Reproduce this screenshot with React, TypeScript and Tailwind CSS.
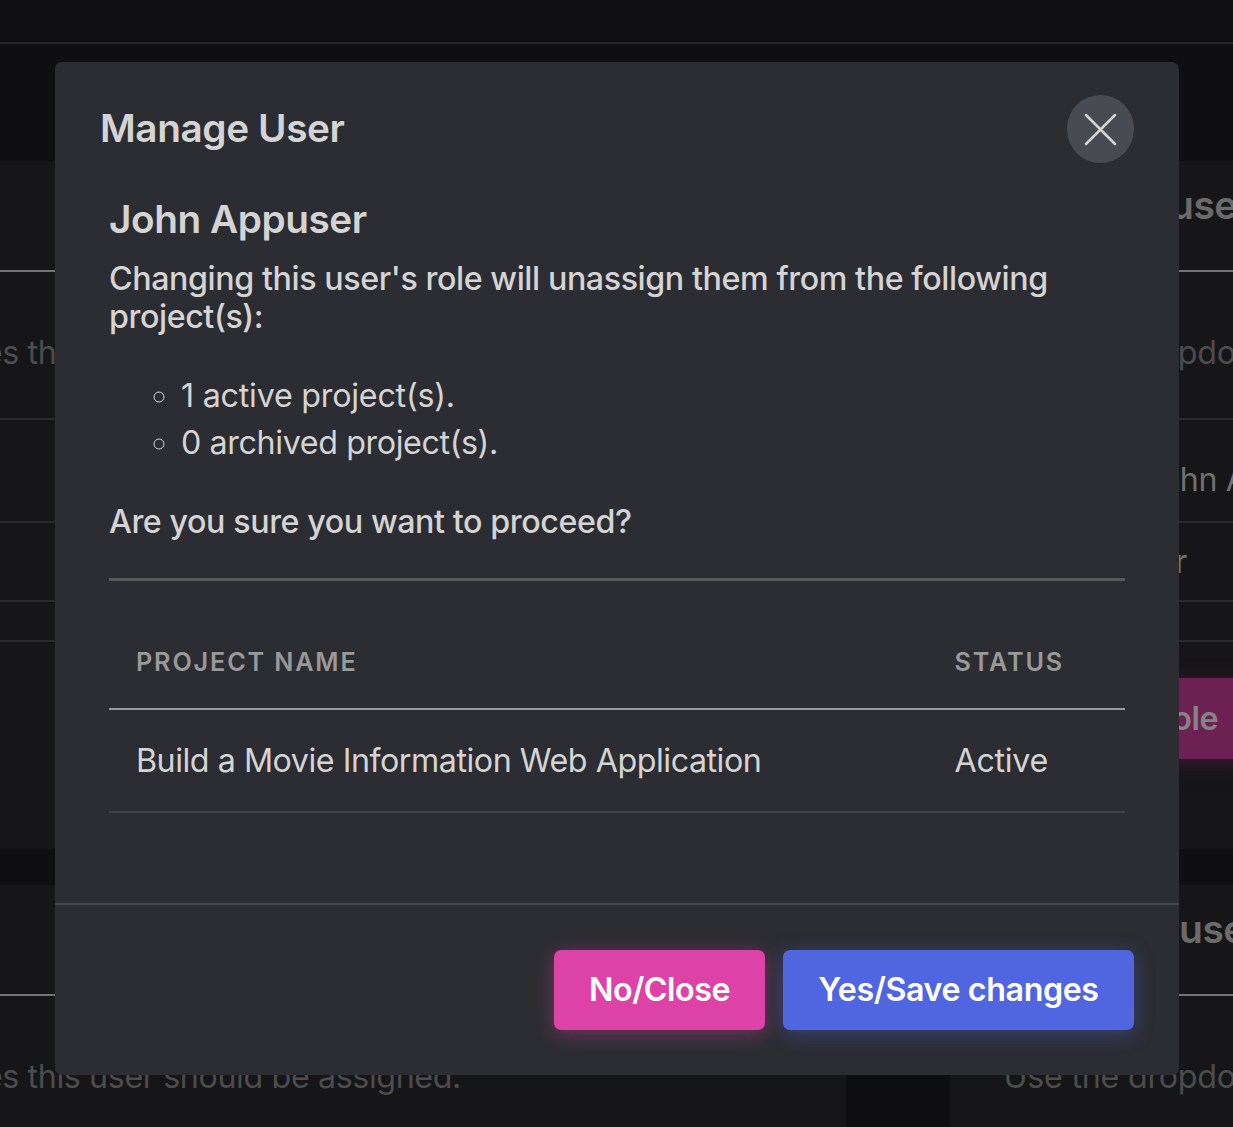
import React from "react";

const stats = [
  { text: "1 active project(s).", tracking: "tracking-[-0.24px]" },
  { text: "0 archived project(s).", tracking: "tracking-[-0.4px]" },
];

function LeftCard({ children }: { children?: React.ReactNode }) {
  return (
    <section className="w-[846px] bg-[#161618]">
      <div className="h-[109px]" />
      <div className="h-0.5 bg-[#747474]" />
      <div className="flex h-[146px] w-[461px] items-center justify-end whitespace-nowrap pt-4 tracking-[-0.4px] text-[#4c4c4c]">
        Select the roles this user should be assigned.
      </div>
      {children}
    </section>
  );
}

function RightCard({ titlePad, children }: { titlePad: string; children?: React.ReactNode }) {
  return (
    <section className="w-[283px] overflow-hidden bg-[#161618]">
      <div className={`flex h-[109px] items-center whitespace-nowrap pb-[21px] text-[39px] font-semibold tracking-[-0.5px] text-[#6b6b6b] ${titlePad}`}>
        user
      </div>
      <div className="h-0.5 bg-[#747474]" />
      <div className="flex h-[146px] items-center whitespace-nowrap pl-[53.5px] pt-4 tracking-[-0.25px] text-[#4c4c4c]">
        Use the dropdown
      </div>
      {children}
    </section>
  );
}

const line = "border-t-2 border-[#2a2a2c]";

function Backdrop() {
  return (
    <div className="h-full w-full">
      <div className="h-11 border-b-2 border-[#262628] bg-[#101012]" />
      <div className="flex h-[805px] justify-between pt-[117px]">
        <LeftCard>
          <div className={`h-[103px] ${line}`} />
          <div className={`h-[79px] ${line}`} />
          <div className={`h-10 ${line}`} />
          <div className={line} />
        </LeftCard>
        <RightCard titlePad="pl-[220px]">
          <div className={`flex h-[103px] items-center whitespace-nowrap pl-[193px] pt-[18px] text-[#707070] ${line}`}>
            John Appuser
          </div>
          <div className={`flex h-[79px] items-center justify-end pr-[46px] text-[#707070] ${line}`}>Developer</div>
          <div className={`h-10 ${line}`} />
          <div className={`flex ${line}`}>
            <div className="mt-9 ml-[54px] flex h-[81px] w-[249px] shrink-0 items-center justify-end bg-[#6d2152] pr-[35px] font-semibold text-[#868386] shadow-[0_4px_20px_rgba(109,33,82,0.45)]">
              Change role
            </div>
          </div>
        </RightCard>
      </div>
      <div className="flex h-[278px] justify-between pt-9">
        <LeftCard />
        <RightCard titlePad="pl-[229px]" />
      </div>
    </div>
  );
}

function ManageUserDialog() {
  return (
    <div
      role="dialog"
      className="absolute left-[55px] top-[62px] flex h-[1013px] w-[1124px] flex-col rounded-[7px] bg-[#2c2d32] text-[#d4d4d4]"
    >
      <header className="flex h-[134px] items-center justify-between px-[45px]">
        <h2 className="pb-1 text-[38.75px] font-semibold leading-[47px] tracking-[-0.4px]">Manage User</h2>
        <button aria-label="Close" className="flex h-[68px] w-[67px] items-center justify-center rounded-full bg-[#494b52]">
          <svg viewBox="0 0 33 33" className="size-[33px]" fill="none" stroke="#d6d6d6" strokeWidth="2.5" strokeLinecap="round">
            <path d="M2 2 31 31M31 2 2 31" />
          </svg>
        </button>
      </header>
      <main className="flex-1 px-[54px]">
        <h3 className="text-[38.75px] font-semibold leading-[45.25px] tracking-[-0.45px]">John Appuser</h3>
        <p className="mt-[19px] font-medium leading-[37.8px] tracking-[-0.43px]">
          Changing this user's role will unassign them from the following project(s):
        </p>
        <ul className="mt-9 pl-[72px] leading-[47.25px] [list-style-type:circle]">
          {stats.map((s) => (
            <li key={s.text} className={s.tracking}>
              {s.text}
            </li>
          ))}
        </ul>
        <p className="mt-[36.5px] font-medium leading-[37.8px] tracking-[-0.43px]">Are you sure you want to proceed?</p>
        <hr className="mt-[37.5px] h-[3px] border-0 bg-[#58595d]" />
        <table className="mt-[35px] w-full table-fixed text-left">
          <thead>
            <tr className="h-[93px] border-b-2 border-[#999b9c] text-[25.2px] uppercase tracking-[1.85px] text-[#999999]">
              <th className="w-[819px] pl-[27px] font-semibold">Project Name</th>
              <th className="pl-[26.5px] font-semibold">Status</th>
            </tr>
          </thead>
          <tbody>
            <tr className="h-[103px] border-b-2 border-[#424347]">
              <td className="pl-[27px] tracking-[-0.48px]">Build a Movie Information Web Application</td>
              <td className="pl-[26.5px] tracking-[-0.3px]">Active</td>
            </tr>
          </tbody>
        </table>
      </main>
      <footer className="flex h-[172px] items-center justify-end gap-[18px] border-t-2 border-[#45464b] px-[45px] font-semibold text-white">
        <button className="h-20 w-[211px] rounded-[7px] bg-[#dd43a7] tracking-[-0.5px] shadow-[0_4px_20px_rgba(221,67,167,0.4)]">
          No/Close
        </button>
        <button className="h-20 w-[351px] rounded-[7px] bg-[#5066e0] tracking-[-0.42px] shadow-[0_4px_20px_rgba(80,102,224,0.4)]">
          Yes/Save changes
        </button>
      </footer>
    </div>
  );
}

export default function App() {
  return (
    <div className="relative h-[1127px] w-[1233px] overflow-hidden bg-[#0f0f11] font-[Inter,sans-serif] text-[32.25px] leading-[47.25px] tracking-[-0.46px]">
      <Backdrop />
      <ManageUserDialog />
    </div>
  );
}
